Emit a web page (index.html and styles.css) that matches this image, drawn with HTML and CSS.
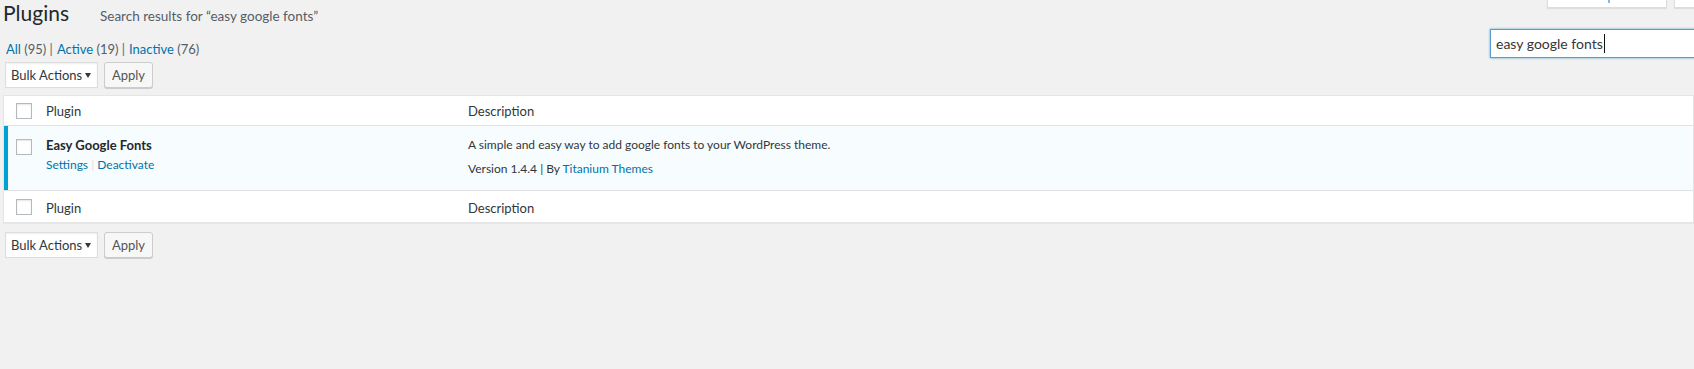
FILE: index.html
```html
<!DOCTYPE html>
<html lang="en">
<head>
  <meta charset="UTF-8" />
  <title>Plugins</title>
  <link rel="stylesheet" href="styles.css">
</head>
<body>
  <div class="screen-tabs">
    <div class="screen-tab options"><span class="descender"></span></div>
    <div class="screen-tab help"></div>
  </div>

  <div class="wrap">
    <div class="page-head">
      <h1>Plugins</h1>
      <span class="subtitle">Search results for “easy google fonts”</span>
    </div>

    <div class="filter-row">
      <ul class="views">
        <li><a href="#">All</a> <span class="count">(95)</span> |</li>
        <li><a href="#">Active</a> <span class="count">(19)</span> |</li>
        <li><a href="#">Inactive</a> <span class="count">(76)</span></li>
      </ul>
      <div class="search-field">easy google fonts<span class="caret"></span></div>
    </div>

    <div class="tablenav">
      <div class="select">Bulk Actions <span class="arrow"></span></div>
      <button class="button">Apply</button>
    </div>

    <table class="plugins">
      <colgroup>
        <col class="col-check">
        <col class="col-name">
        <col>
      </colgroup>
      <thead>
        <tr>
          <th class="check-column"><span class="checkbox"></span></th>
          <th>Plugin</th>
          <th>Description</th>
        </tr>
      </thead>
      <tbody>
        <tr class="active">
          <td class="check-column"><span class="checkbox"></span></td>
          <td class="plugin-title">
            <strong>Easy Google Fonts</strong>
            <div class="row-actions"><a href="#">Settings</a> <span class="sep">|</span> <a href="#">Deactivate</a></div>
          </td>
          <td class="desc">
            <p>A simple and easy way to add google fonts to your WordPress theme.</p>
            <p>Version 1.4.4 | By <a href="#">Titanium Themes</a></p>
          </td>
        </tr>
      </tbody>
      <tfoot>
        <tr>
          <th class="check-column"><span class="checkbox"></span></th>
          <th>Plugin</th>
          <th>Description</th>
        </tr>
      </tfoot>
    </table>

    <div class="tablenav bottom">
      <div class="select">Bulk Actions <span class="arrow"></span></div>
      <button class="button">Apply</button>
    </div>
  </div>
</body>
</html>
```

FILE: styles.css
```css
html, body {
  overflow: hidden;
}
body {
  margin: 0;
  background: #f1f1f1;
  color: #444;
  font-family: Lato, "Open Sans", sans-serif;
  font-size: 13px;
  line-height: 18px;
}
a {
  color: #0073aa;
  text-decoration: none;
}

/* tabs hanging from the top edge */
.screen-tabs {
  position: absolute;
  top: 0;
  right: -38px;
  display: flex;
  gap: 7px;
}
.screen-tab {
  position: relative;
  height: 7px;
  background: #fff;
  border: 1px solid #ddd;
  border-top: none;
  box-shadow: 0 1px 1px rgba(0, 0, 0, 0.08);
}
.screen-tab.options {
  width: 118px;
}
.screen-tab.help {
  width: 56px;
}
.descender {
  position: absolute;
  left: 60px;
  top: 0;
  width: 2px;
  height: 3px;
  background: linear-gradient(to right, #8fb6d8 50%, #d9a46a 50%);
}

.wrap {
  padding-left: 3px;
}

.page-head {
  display: flex;
  align-items: baseline;
  gap: 31px;
  height: 29px;
}
.page-head h1 {
  margin: 0;
  font-size: 21px;
  font-weight: 400;
  line-height: 25px;
  color: #23282d;
}
.subtitle {
  color: #555d66;
  font-size: 13.5px;
}

.filter-row {
  display: flex;
  justify-content: space-between;
  align-items: flex-end;
}
.views {
  display: flex;
  gap: 4px;
  margin: 0 0 0 3px;
  padding: 0;
  list-style: none;
  color: #666;
}
.views .count {
  color: #555d66;
}
.search-field {
  box-sizing: border-box;
  flex: 0 0 260px;
  margin-right: -56px;
  height: 29px;
  padding: 0 5px;
  background: #fff;
  border: 1px solid #5b9dd9;
  box-shadow: 0 0 2px rgba(30, 140, 190, 0.8);
  color: #32373c;
  font-size: 14px;
  line-height: 27px;
}
.caret {
  display: inline-block;
  width: 1px;
  height: 19px;
  margin-left: 1px;
  background: #111;
  vertical-align: -4px;
}

.tablenav {
  display: flex;
  gap: 6px;
  margin: 4px 0 7px 2px;
}
.tablenav.bottom {
  margin-top: 9px;
}
.select {
  box-sizing: border-box;
  display: flex;
  justify-content: space-between;
  align-items: center;
  width: 93px;
  height: 26px;
  padding: 0 6px 0 5px;
  background: #fff;
  border: 1px solid #ddd;
  box-shadow: inset 0 1px 2px rgba(0, 0, 0, 0.07);
  color: #32373c;
  line-height: 24px;
}
.arrow {
  width: 0;
  height: 0;
  border-left: 3px solid transparent;
  border-right: 3px solid transparent;
  border-top: 5px solid #32373c;
}
.button {
  box-sizing: border-box;
  width: 49px;
  height: 26px;
  padding: 0;
  background: #f7f7f7;
  border: 1px solid #ccc;
  border-radius: 3px;
  box-shadow: 0 1px 0 #ccc;
  color: #555;
  font: inherit;
  line-height: 24px;
}

.plugins {
  width: 100%;
  table-layout: fixed;
  border-collapse: separate;
  border-spacing: 0;
  background: #fff;
  border: 1px solid #e5e5e5;
  box-shadow: 0 1px 1px rgba(0, 0, 0, 0.04);
}
.col-check {
  width: 32px;
}
.col-name {
  width: 422px;
}
.plugins th {
  padding: 6px 10px 5px;
  text-align: left;
  font-weight: 400;
  color: #32373c;
  vertical-align: top;
}
.plugins thead th {
  border-bottom: 1px solid #e1e1e1;
}
.plugins tfoot th {
  padding: 8px 10px 5px;
  border-top: 1px solid #e1e1e1;
}
.plugins .check-column {
  padding-left: 12px;
  padding-right: 0;
}
.checkbox {
  display: block;
  box-sizing: border-box;
  width: 16px;
  height: 16px;
  margin-top: 1px;
  background: #fff;
  border: 1px solid #b4b9be;
  box-shadow: inset 0 1px 2px rgba(0, 0, 0, 0.1);
}
.plugins tfoot .checkbox {
  margin-top: 0;
}
.plugins td {
  padding: 10px 10px 12px;
  vertical-align: top;
  color: #32373c;
  font-size: 12px;
}
.plugins tr.active td {
  background: #f7fcfe;
}
.plugins tr.active td.check-column {
  padding-top: 12px;
  box-shadow: inset 4px 0 0 #00a0d2;
}
.plugin-title strong {
  display: block;
  color: #23282d;
  font-size: 13px;
  font-weight: 700;
}
.row-actions {
  padding-top: 2px;
}
.row-actions .sep {
  color: #ddd;
}
.desc p {
  margin: 0 0 6px;
}
.desc p:last-child {
  margin-bottom: 0;
}
```
